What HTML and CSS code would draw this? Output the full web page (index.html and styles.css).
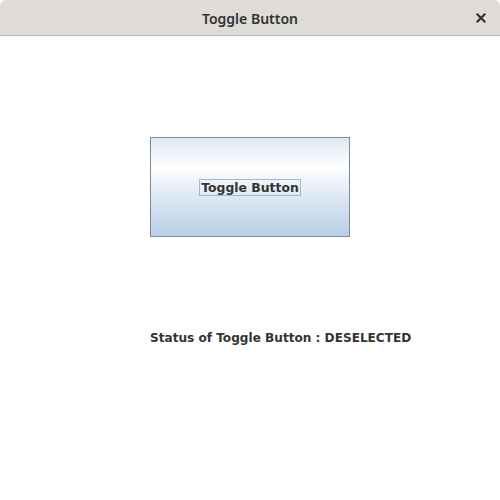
FILE: index.html
```html
<!DOCTYPE html>
<html>
<head>
<meta charset="utf-8">
<link rel="stylesheet" href="styles.css">
</head>
<body>
<div class="window">
  <div class="titlebar">
    <span class="title">Toggle Button</span>
    <span class="close">
      <svg width="10" height="10" viewBox="0 0 10 10"><path d="M1.5 1.5 L8.5 8.5 M8.5 1.5 L1.5 8.5" stroke="#2e3436" stroke-width="2.2" stroke-linecap="square"/></svg>
    </span>
  </div>
  <div class="content">
    <button class="toggle"><span class="focus">Toggle Button</span></button>
    <div class="status">Status of Toggle Button : DESELECTED</div>
  </div>
</div>
</body>
</html>
```
FILE: styles.css
```css
html, body {
  margin: 0;
  padding: 0;
  width: 500px;
  height: 500px;
  background: #ffffff;
  overflow: hidden;
}
.window {
  width: 500px;
  height: 500px;
  display: flex;
  flex-direction: column;
}
.titlebar {
  height: 36px;
  flex: 0 0 36px;
  box-sizing: border-box;
  background: #dfdcd8;
  border-bottom: 1px solid #bfb8b0;
  border-radius: 6px 6px 0 0;
  position: relative;
  display: flex;
  align-items: center;
  justify-content: center;
}
.title {
  font-family: "Noto Sans", "DejaVu Sans", sans-serif;
  font-weight: 600;
  font-size: 14px;
  color: #2e3436;
  margin-top: 1px;
}
.close {
  position: absolute;
  right: 14px;
  top: 13px;
  width: 10px;
  height: 10px;
  display: flex;
}
.content {
  flex: 1;
  display: flex;
  flex-direction: column;
  padding: 101px 0 0 150px;
}
.toggle {
  width: 200px;
  height: 100px;
  box-sizing: border-box;
  margin: 0;
  padding: 0;
  border: 1px solid #7a8a99;
  background: linear-gradient(to bottom, #dde8f3 0%, #ffffff 30%, #dde8f3 60%, #b8cfe5 100%);
  display: flex;
  align-items: center;
  justify-content: center;
  font-family: "DejaVu Sans", sans-serif;
  font-weight: bold;
  font-size: 12.4px;
  color: #333333;
}
.focus {
  border: 1px solid #a3b8cc;
  padding: 0 1px;
  line-height: 15px;
}
.status {
  margin-top: 93px;
  font-family: "DejaVu Sans", sans-serif;
  font-weight: bold;
  font-size: 12.1px;
  color: #333333;
  line-height: 16px;
}
```
